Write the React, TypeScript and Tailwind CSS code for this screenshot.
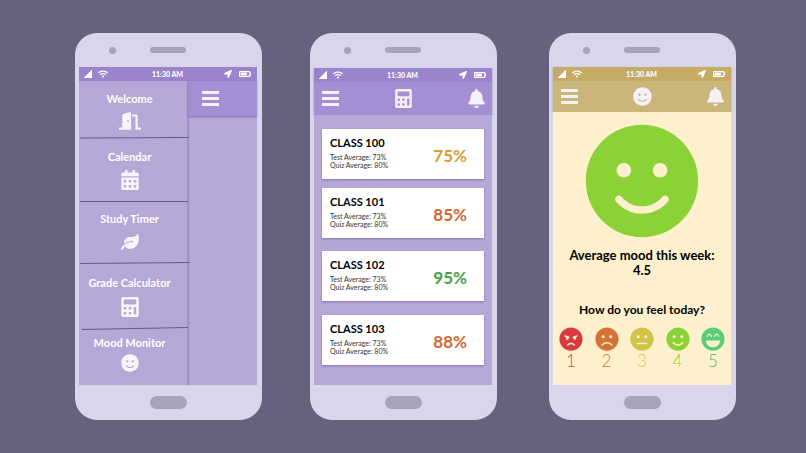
import React from "react";
import type { ReactNode } from "react";
import type { IconType } from "react-icons";
import {
  FaAngry,
  FaBatteryThreeQuarters,
  FaBell,
  FaCalculator,
  FaCalendarAlt,
  FaDoorOpen,
  FaFrown,
  FaLaughBeam,
  FaLeaf,
  FaLocationArrow,
  FaMeh,
  FaSmile,
  FaWifi,
} from "react-icons/fa";

function Phone({ children, className = "" }: { children: ReactNode; className?: string }) {
  return (
    <section
      className={`flex h-[387px] w-[187px] shrink-0 flex-col rounded-[22px] bg-[#d9d5ea] pr-[5px] pl-1 ${className}`}
    >
      <div className="flex h-[34px] shrink-0 items-center pl-[30px]">
        <span className="size-[7px] rounded-full bg-[#a8a3ba]" />
        <span className="ml-[34px] h-[6px] w-9 rounded-full bg-[#a8a3ba]" />
      </div>
      <div className="flex min-h-0 flex-1 flex-col">{children}</div>
      <div className="flex h-[35px] shrink-0 items-center justify-center">
        <button aria-label="Home" className="h-[13px] w-[37px] rounded-full bg-[#a8a3ba]" />
      </div>
    </section>
  );
}

function StatusBar({ className }: { className: string }) {
  return (
    <div className={`grid h-[14px] shrink-0 grid-cols-3 items-center pr-[6px] pl-[5px] text-white ${className}`}>
      <div className="flex items-center gap-[6px]">
        <svg viewBox="0 0 8 8" className="size-2" fill="currentColor">
          <path d="M0 8V7h1V6h1V5h1V4h1V3h1V2h1V1h1V0h1v8z" />
        </svg>
        <FaWifi size={10} />
      </div>
      <span className="text-center text-[7px] leading-none font-black whitespace-nowrap">11:30 AM</span>
      <div className="flex items-center justify-end gap-[7px]">
        <FaLocationArrow size={8} />
        <FaBatteryThreeQuarters size={12} />
      </div>
    </div>
  );
}

function MenuButton() {
  return (
    <button aria-label="Menu" className="flex w-[17px] flex-col gap-[3px]">
      <span className="h-[3px] w-full bg-[#f4f1f8]" />
      <span className="h-[3px] w-full bg-[#f4f1f8]" />
      <span className="h-[3px] w-full bg-[#f4f1f8]" />
    </button>
  );
}

function TopBar({ icon: Icon, className }: { icon: IconType; className: string }) {
  return (
    <div className={`flex shrink-0 items-center justify-between pr-[6px] pl-2 text-[#f4f1f8] ${className}`}>
      <MenuButton />
      <Icon size={19} />
      <button aria-label="Notifications">
        <FaBell size={19} />
      </button>
    </div>
  );
}

type Item = { label: string; icon: IconType; size: number; box: string; line?: [number, number, number, number] };

const menu: Item[] = [
  { label: "Welcome", icon: FaDoorOpen, size: 22, box: "h-[57px] pt-[10px] gap-[3px]", line: [1, 1, 110, 0.5] },
  { label: "Calendar", icon: FaCalendarAlt, size: 20, box: "h-[63px] pt-[11px] gap-[5px]", line: [1, 1.5, 109, 1.5] },
  { label: "Study Timer", icon: FaLeaf, size: 18, box: "h-[62px] pt-[10px] gap-[6px]", line: [1, 1.5, 111, 0.5] },
  { label: "Grade Calculator", icon: FaCalculator, size: 20, box: "h-[65px] pt-[12px] gap-[6px]", line: [3, 2.5, 109, 0.5] },
  { label: "Mood Monitor", icon: FaSmile, size: 18, box: "h-[57px] pt-[7px] gap-[3px]" },
];

function Drawer() {
  return (
    <nav className="w-[109px] shrink-0 border-r border-[#a495c9] bg-[#b5a8d7] shadow-[1px_0_1px_rgba(90,70,140,0.25)]">
      {menu.map(({ label, icon: Icon, size, box, line }) => (
        <div key={label} className="relative">
          <a href="#" className={`flex flex-col items-center pr-[7px] text-[#f7f5fb] ${box}`}>
            <span className="text-[11px] leading-4 font-bold whitespace-nowrap text-white">{label}</span>
            <Icon size={size} />
          </a>
          {line && (
            <svg viewBox="0 0 112 3" className="absolute -bottom-[2px] left-0 h-[3px] w-[112px]">
              <line x1={line[0]} y1={line[1]} x2={line[2]} y2={line[3]} stroke="#655a82" strokeWidth="1" />
            </svg>
          )}
        </div>
      ))}
    </nav>
  );
}

const classes = [
  { name: "CLASS 100", grade: "75%", color: "text-[#dc9a33]", gap: "mt-[14px]" },
  { name: "CLASS 101", grade: "85%", color: "text-[#d2692f]", gap: "mt-[9px]" },
  { name: "CLASS 102", grade: "95%", color: "text-[#45a347]", gap: "mt-[13px]" },
  { name: "CLASS 103", grade: "88%", color: "text-[#d2692f]", gap: "mt-[14px]" },
];

const moods = [
  { value: 1, icon: FaAngry, face: "text-[#d73b3d]", text: "text-[#cf4a48]" },
  { value: 2, icon: FaFrown, face: "text-[#d37435]", text: "text-[#d37435]" },
  { value: 3, icon: FaMeh, face: "text-[#cfc446]", text: "text-[#d3c850]" },
  { value: 4, icon: FaSmile, face: "text-[#8bd237]", text: "text-[#8bd237]" },
  { value: 5, icon: FaLaughBeam, face: "text-[#56cf78]", text: "text-[#33c063]" },
];

export default function App() {
  return (
    <main className="flex min-h-screen items-start justify-center bg-[#66617d] pt-[33px] pl-[5px] font-[Lato,sans-serif]">
      <Phone>
        <StatusBar className="bg-[#9c84cd]" />
        <div className="flex min-h-0 flex-1 bg-[#b5a8d7]">
          <Drawer />
          <div className="flex-1">
            <div className="flex h-[35px] items-center bg-[#a58fd4] pl-[14px] shadow-[0_1px_2px_rgba(60,40,110,0.4)]">
              <MenuButton />
            </div>
          </div>
        </div>
      </Phone>

      <Phone className="ml-12">
        <div className="mt-px shadow-[0_1px_2px_rgba(60,40,110,0.4)]">
          <StatusBar className="bg-[#9c84cd]" />
          <TopBar icon={FaCalculator} className="h-[33px] bg-[#a58fd4]" />
        </div>
        <div className="flex-1 bg-[#b5a8d7] px-2">
          {classes.map(({ name, grade, color, gap }) => (
            <article
              key={name}
              className={`flex h-[50px] items-center justify-between bg-white pr-[17px] pl-2 shadow-[0_1px_2px_rgba(60,40,110,0.4)] ${gap}`}
            >
              <div className="pb-1">
                <h2 className="mb-[2px] text-[11px] leading-4 font-bold text-black">{name}</h2>
                <p className="text-[7px] leading-2 text-[#333]">Test Average: 73%</p>
                <p className="text-[7px] leading-2 text-[#333]">Quiz Average: 80%</p>
              </div>
              <span className={`pt-1 text-[17px] leading-5 font-bold ${color}`}>{grade}</span>
            </article>
          ))}
        </div>
      </Phone>

      <Phone className="ml-[52px]">
        <div className="shadow-[0_1px_2px_rgba(100,80,30,0.4)]">
          <StatusBar className="bg-[#c5ab66]" />
          <TopBar icon={FaSmile} className="h-[31px] bg-[#cab678]" />
        </div>
        <div className="flex flex-1 flex-col items-center bg-[#fff0cd] text-black">
          <FaSmile size={116} className="mt-[11px] shrink-0 text-[#8bd237]" />
          <h2 className="mt-[9px] text-center text-[13px] leading-[15px] font-bold">
            Average mood this week:
            <br />
            4.5
          </h2>
          <h3 className="mt-6 text-[12px] leading-4 font-bold">How do you feel today?</h3>
          <div className="mt-[9px] flex w-full justify-between px-[6px]">
            {moods.map(({ value, icon: Icon, face, text }) => (
              <button key={value} className="flex flex-col items-center">
                <Icon size={24} className={face} />
                <span className={`text-[17px] leading-5 font-light ${text}`}>{value}</span>
              </button>
            ))}
          </div>
        </div>
      </Phone>
    </main>
  );
}
